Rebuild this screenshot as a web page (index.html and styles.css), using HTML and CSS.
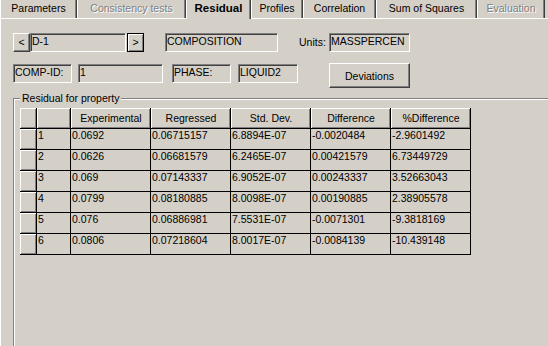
FILE: index.html
```html
<!DOCTYPE html>
<html lang="en">
<head>
    <meta charset="UTF-8">
    <meta name="viewport" content="width=device-width, initial-scale=1.0">
    <title>Residual</title>
    <link rel="stylesheet" href="styles.css">
</head>
<body>
    <div class="tabs">
        <div class="tab tab-params">Parameters</div>
        <div class="tab tab-consist disabled">Consistency tests</div>
        <div class="tab tab-resid active">Residual</div>
        <div class="tab tab-profiles">Profiles</div>
        <div class="tab tab-corr">Correlation</div>
        <div class="tab tab-sum">Sum of Squares</div>
        <div class="tab tab-eval disabled">Evaluation</div>
    </div>
    <div class="panel">
        <div class="row">
            <button class="btn btn-nav">&lt;</button>
            <div class="field w-dataset">D-1</div>
            <button class="btn btn-nav btn-default">&gt;</button>
            <div class="field w-prop">COMPOSITION</div>
            <span class="label">Units:</span>
            <div class="field w-units">MASSPERCEN</div>
        </div>
        <div class="row row-second">
            <div class="field w-tag">COMP-ID:</div>
            <div class="field w-id">1</div>
            <div class="field w-tag w-phase-tag">PHASE:</div>
            <div class="field w-phase">LIQUID2</div>
            <button class="btn btn-dev">Deviations</button>
        </div>
        <fieldset class="group">
            <legend>Residual for property</legend>
            <table class="grid">
                <tr>
                    <th class="c-row"></th>
                    <th class="c-num"></th>
                    <th class="c-val">Experimental</th>
                    <th class="c-val">Regressed</th>
                    <th class="c-val">Std. Dev.</th>
                    <th class="c-val">Difference</th>
                    <th class="c-val">%Difference</th>
                </tr>
                <tr>
                    <th class="rowhd"></th>
                    <td>1</td><td>0.0692</td><td>0.06715157</td><td>6.8894E-07</td><td>-0.0020484</td><td>-2.9601492</td>
                </tr>
                <tr>
                    <th class="rowhd"></th>
                    <td>2</td><td>0.0626</td><td>0.06681579</td><td>6.2465E-07</td><td>0.00421579</td><td>6.73449729</td>
                </tr>
                <tr>
                    <th class="rowhd"></th>
                    <td>3</td><td>0.069</td><td>0.07143337</td><td>6.9052E-07</td><td>0.00243337</td><td>3.52663043</td>
                </tr>
                <tr>
                    <th class="rowhd"></th>
                    <td>4</td><td>0.0799</td><td>0.08180885</td><td>8.0098E-07</td><td>0.00190885</td><td>2.38905578</td>
                </tr>
                <tr>
                    <th class="rowhd"></th>
                    <td>5</td><td>0.076</td><td>0.06886981</td><td>7.5531E-07</td><td>-0.0071301</td><td>-9.3818169</td>
                </tr>
                <tr>
                    <th class="rowhd"></th>
                    <td>6</td><td>0.0806</td><td>0.07218604</td><td>8.0017E-07</td><td>-0.0084139</td><td>-10.439148</td>
                </tr>
            </table>
        </fieldset>
    </div>
</body>
</html>
```

FILE: styles.css
```css
html, body {
    margin: 0;
    height: 346px;
    overflow: hidden;
}
body {
    background-color: #d4d0c8;
    font-family: "Liberation Sans", Arial, sans-serif;
    font-size: 10.5px;
    color: #000;
}

/* tab strip */
.tabs {
    display: flex;
    height: 20px;
    margin-top: -2px;
}
.tab {
    box-sizing: border-box;
    height: 20px;
    line-height: 20px;
    text-align: center;
    white-space: nowrap;
    border-left: 1px solid #fff;
    border-right: 1px solid #404040;
    box-shadow: inset -1px 0 #808080;
}
.tab.disabled {
    color: #808080;
    text-shadow: 1px 1px 0 #fff;
}
.tab.active {
    height: 21px;
    font-weight: bold;
    font-size: 11.5px;
    position: relative;
    z-index: 1;
    background-color: #d4d0c8;
}
.tab-params { width: 77px; }
.tab-consist { width: 109px; }
.tab-resid { width: 65px; }
.tab-profiles { width: 52px; }
.tab-corr { width: 73px; }
.tab-sum { width: 101px; }
.tab-eval { width: 68px; }

.panel {
    box-sizing: border-box;
    height: 328px;
    padding-top: 15px;
    box-shadow: inset 1px 1px #fff;
    overflow: hidden;
}

/* controls */
.row {
    display: flex;
    align-items: flex-start;
}
.row-second {
    margin-top: 12px;
}
.field {
    box-sizing: border-box;
    height: 19px;
    line-height: 15px;
    padding-left: 1px;
    white-space: nowrap;
    overflow: hidden;
    border: 1px solid;
    border-color: #808080 #fff #fff #808080;
    box-shadow: inset 1px 1px #404040;
}
.btn {
    box-sizing: border-box;
    margin: 0;
    padding: 0;
    font: inherit;
    color: #000;
    background-color: #d4d0c8;
    border: 1px solid;
    border-color: #fff #404040 #404040 #fff;
    box-shadow: inset -1px -1px #808080;
}
.btn-nav {
    width: 17px;
    height: 19px;
    line-height: 15px;
    margin-left: 13px;
}
.btn-default {
    margin-left: 1px;
    border-color: #000;
    box-shadow: inset 1px 1px #fff, inset -1px -1px #808080;
}
.w-dataset { width: 96px; }
.w-prop { width: 113px; margin-left: 21px; }
.label {
    width: 30px;
    margin-left: 21px;
    line-height: 19px;
}
.w-units { width: 81px; }
.w-tag { width: 59px; margin-left: 13px; }
.w-id { width: 85px; margin-left: 6px; }
.w-phase-tag { margin-left: 9px; }
.w-phase { width: 60px; margin-left: 7px; }
.btn-dev {
    width: 81px;
    height: 25px;
    margin-left: 31px;
    margin-top: -1px;
}

/* group box, open to the right and bottom edges */
.group {
    box-sizing: border-box;
    width: 535px;
    height: 254px;
    margin: 4px 0 0 13px;
    padding: 3px 0 0 6px;
    min-width: 0;
    border: 1px solid #808080;
    border-right: 0;
    border-bottom: 0;
    box-shadow: inset 1px 1px #fff;
}
.group legend {
    padding: 0 2px;
    line-height: 13px;
    background-color: #d4d0c8;
}

/* grid */
.grid {
    border-collapse: separate;
    border-spacing: 0;
    table-layout: fixed;
    width: 451px;
}
.grid th,
.grid td {
    box-sizing: border-box;
    height: 21px;
    padding: 0 0 0 1px;
    border-right: 1px solid #000;
    border-bottom: 1px solid #000;
    line-height: 13px;
    white-space: nowrap;
    overflow: hidden;
    vertical-align: top;
    text-align: left;
    font-weight: normal;
}
.grid th {
    text-align: center;
    vertical-align: middle;
    box-shadow: inset 1px 1px #fff, inset -1px -1px #808080;
}
.c-row { width: 17px; }
.c-num { width: 34px; }
.c-val { width: 80px; }
```
